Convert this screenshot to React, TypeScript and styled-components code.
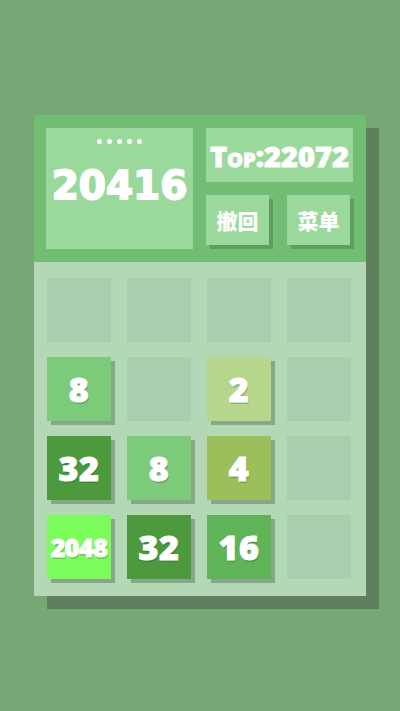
import { FC } from 'react';
import styled, { createGlobalStyle } from 'styled-components';

const colors = {
  page: '#77a677',
  frameShadow: '#5f7f5e',
  header: '#71bd73',
  panel: '#9ad99b',
  panelShadow: '#5e9d5f',
  board: '#b4d8b6',
  cell: '#a9cead',
  tileShadow: '#88a689',
  white: '#ffffff',
};

const tileColors: Record<number, string> = {
  2: '#b6d68b',
  4: '#9bc05b',
  8: '#7ccb7b',
  16: '#60b458',
  32: '#4c9a3d',
  2048: '#7cfc5b',
};

// 0 = empty cell
const grid: number[] = [
  0, 0, 0, 0,
  8, 0, 2, 0,
  32, 8, 4, 0,
  2048, 32, 16, 0,
];

const GlobalStyle = createGlobalStyle`
  html, body {
    margin: 0;
    padding: 0;
    height: 100%;
  }

  body {
    background: ${colors.page};
    font-family: 'Open Sans', 'Noto Sans CJK SC', sans-serif;
  }

  #root {
    height: 100%;
  }
`;

const StyledPage = styled.div`
  display: flex;
  align-items: center;
  justify-content: center;
  min-height: 100%;
  background: ${colors.page};
`;

const StyledGame = styled.div`
  width: 332px;
  display: flex;
  flex-direction: column;
  box-shadow: 13px 13px 0 ${colors.frameShadow};
`;

const StyledHeader = styled.div`
  display: flex;
  gap: 13px;
  padding: 13px 13px 13px 12px;
  background: ${colors.header};
`;

const StyledScoreBox = styled.div`
  width: 147px;
  height: 121px;
  box-sizing: border-box;
  padding-top: 11px;
  display: flex;
  flex-direction: column;
  align-items: center;
  background: ${colors.panel};
`;

const StyledDots = styled.div`
  display: flex;
  gap: 5px;
`;

const StyledDot = styled.span`
  width: 5px;
  height: 5px;
  border-radius: 50%;
  background: ${colors.white};
`;

const StyledScore = styled.div`
  margin-top: 19px;
  font-family: 'DejaVu Sans', sans-serif;
  font-weight: 700;
  font-size: 39px;
  line-height: 46px;
  color: ${colors.white};
  -webkit-text-stroke: 1.8px ${colors.white};
`;

const StyledSide = styled.div`
  width: 147px;
  display: flex;
  flex-direction: column;
  gap: 13px;
`;

const StyledTopBox = styled.div`
  height: 54px;
  display: flex;
  align-items: center;
  justify-content: center;
  background: ${colors.panel};
  font-family: 'Open Sans', sans-serif;
  font-weight: 800;
  font-size: 29px;
  font-variant: small-caps;
  color: ${colors.white};
  -webkit-text-stroke: 0.8px ${colors.white};
`;

const StyledButtonRow = styled.div`
  display: flex;
  gap: 18px;
`;

const StyledButton = styled.button`
  width: 63px;
  height: 50px;
  padding: 0;
  border: none;
  background: ${colors.panel};
  box-shadow: 4px 4px 0 ${colors.panelShadow};
  color: ${colors.white};
  font-family: 'Noto Sans CJK SC', sans-serif;
  font-weight: 900;
  font-size: 21px;
  cursor: pointer;
`;

const StyledBoard = styled.div`
  display: grid;
  grid-template-columns: repeat(4, 64px);
  grid-auto-rows: 64px;
  column-gap: 16px;
  row-gap: 15px;
  padding: 16px 15px 17px 13px;
  background: ${colors.board};
`;

const StyledCell = styled.div`
  background: ${colors.cell};
`;

const StyledTile = styled.div<{ $bg: string; $small?: boolean }>`
  display: flex;
  align-items: center;
  justify-content: center;
  background: ${({ $bg }) => $bg};
  box-shadow: 4px 4px 0 ${colors.tileShadow};
  color: ${colors.white};
  font-family: 'Open Sans', sans-serif;
  font-weight: 800;
  font-size: ${({ $small }) => ($small ? '25px' : '34px')};
  letter-spacing: ${({ $small }) => ($small ? '-0.5px' : '0.5px')};
  -webkit-text-stroke: 1px ${colors.white};
  text-shadow: 1px 1.5px 0 rgba(40, 70, 40, 0.3);
`;

const Tile: FC<{ value: number }> = ({ value }) => {
  if (!value) return <StyledCell />;
  return (
    <StyledTile $bg={tileColors[value]} $small={value >= 1000}>
      {value}
    </StyledTile>
  );
};

const App: FC = () => {
  return (
    <>
      <GlobalStyle />
      <StyledPage>
        <StyledGame>
          <StyledHeader>
            <StyledScoreBox>
              <StyledDots>
                {[0, 1, 2, 3, 4].map((i) => (
                  <StyledDot key={i} />
                ))}
              </StyledDots>
              <StyledScore>20416</StyledScore>
            </StyledScoreBox>
            <StyledSide>
              <StyledTopBox>Top:22072</StyledTopBox>
              <StyledButtonRow>
                <StyledButton>撤回</StyledButton>
                <StyledButton>菜单</StyledButton>
              </StyledButtonRow>
            </StyledSide>
          </StyledHeader>
          <StyledBoard>
            {grid.map((value, i) => (
              <Tile key={i} value={value} />
            ))}
          </StyledBoard>
        </StyledGame>
      </StyledPage>
    </>
  );
};

export default App;
